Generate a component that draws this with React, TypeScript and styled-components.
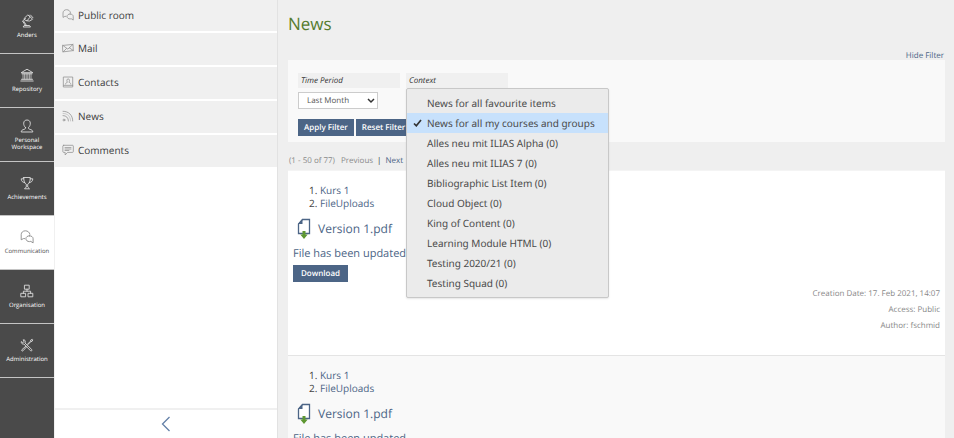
import React from "react";
import styled, { createGlobalStyle, css } from "styled-components";

const GlobalStyle = createGlobalStyle`
  *, *::before, *::after { box-sizing: border-box; }
  body {
    margin: 0;
    background: #efefef;
    color: #333;
    font-family: "Open Sans", "Noto Sans", sans-serif;
    font-size: 11px;
    text-rendering: geometricPrecision;
  }
  button, select { font: inherit; text-rendering: inherit; }
  a { color: #4c6586; text-decoration: none; }
  ul, ol { margin: 0; padding: 0; }
`;

const Page = styled.div`
  display: flex;
  height: 100vh;
  overflow: hidden;
`;

const MainBar = styled.nav`
  flex: 0 0 54px;
  background: #4a4a4a;
`;

const BarButton = styled.button<{ $active?: boolean }>`
  display: flex;
  flex-direction: column;
  align-items: center;
  justify-content: center;
  gap: 4px;
  width: 100%;
  height: 54px;
  padding: 0;
  border: 0;
  border-bottom: 1px solid #c4c4c4;
  background: ${(p) => (p.$active ? "#fff" : "#4a4a4a")};
  color: ${(p) => (p.$active ? "#4a4a4a" : "#fff")};
  font-size: 6px;
  line-height: 7px;
  text-align: center;

  svg {
    color: ${(p) => (p.$active ? "#8a8a8a" : "#dcdcdc")};
  }
`;

const BarLabel = styled.span`
  padding: 0 4px;
`;

const Slate = styled.aside`
  flex: 0 0 224px;
  display: flex;
  flex-direction: column;
  background: #fff;
  border-left: 1px solid #f0f0f0;
  border-right: 1px solid #e2e2e2;
`;

const SlateList = styled.div`
  flex: 1;
  display: flex;
  flex-direction: column;
  gap: 2px;
`;

const SlateButton = styled.button<{ $first?: boolean }>`
  display: flex;
  align-items: center;
  gap: 4px;
  height: ${(p) => (p.$first ? 31 : 32)}px;
  padding: 0 7px 2px;
  border: 0;
  background: #f0f0f0;
  color: #3c3c3c;
  font-size: 10px;
  text-align: left;

  svg {
    color: #8f8f8f;
  }
`;

const SlateClose = styled.button`
  display: flex;
  align-items: center;
  justify-content: center;
  height: 30px;
  padding: 0;
  border: 0;
  border-top: 2px solid #f0f0f0;
  background: #fff;
  color: #6480a8;
`;

const Content = styled.main`
  flex: 1;
  min-width: 0;
  padding: 10px 9px 0 10px;
`;

const Title = styled.h1`
  margin: 0;
  color: #557b2e;
  font-size: 17px;
  font-weight: 400;
  line-height: 28px;
`;

const FilterToggle = styled.div`
  display: flex;
  justify-content: flex-end;
  margin-top: 14px;
  padding-right: 1px;
  font-size: 8px;
  line-height: 8px;
`;

const FilterPanel = styled.form`
  padding: 13px 10px 6px;
  background: #f9f9f9;
`;

const Fields = styled.div`
  display: flex;
  gap: 6px;
`;

const Field = styled.div`
  position: relative;
  width: 102px;
`;

const FieldLabel = styled.label`
  display: block;
  padding: 0 3px;
  background: #f0f0f0;
  font-size: 8px;
  font-style: italic;
  line-height: 15px;
`;

const SelectBox = styled.div`
  position: relative;
  display: flex;
  align-items: center;
  width: 80px;
  margin-top: 4px;

  svg {
    position: absolute;
    right: 3px;
    pointer-events: none;
  }
`;

const Select = styled.select`
  appearance: none;
  width: 100%;
  height: 17px;
  padding: 0 8px;
  border: 1px solid #ccc;
  border-radius: 0;
  background: #fff;
  color: #555;
  font-size: 8px;
  line-height: 15px;
`;

const Menu = styled.ul`
  position: absolute;
  z-index: 2;
  top: 15px;
  left: 0;
  width: 203px;
  padding: 4px 0;
  border: 1px solid #c8c8c8;
  border-radius: 2px;
  background: #ebebeb;
  box-shadow: 0 1px 2px rgba(0, 0, 0, 0.1);
  list-style: none;
`;

const MenuOption = styled.button<{ $selected: boolean }>`
  display: grid;
  grid-template-columns: 14px 1fr;
  align-items: center;
  width: 100%;
  height: 20px;
  padding: 0 6px;
  border: 0;
  background: ${(p) => (p.$selected ? "#c7e1fc" : "transparent")};
  color: #4a4a4a;
  font-family: "Noto Sans", sans-serif;
  font-size: 10px;
  line-height: 20px;
  text-align: left;
  white-space: nowrap;
`;

const FilterActions = styled.div`
  display: flex;
  gap: 2px;
  margin-top: 10px;
`;

const solid = css`
  height: 17px;
  border: 0;
  background: #4c6586;
  color: #fff;
  font-size: 8px;
  font-weight: 600;
  line-height: 17px;
  white-space: nowrap;
`;

const ActionButton = styled.button`
  ${solid}
  padding: 0 6px;
`;

const DownloadButton = styled.button`
  ${solid}
  display: block;
  margin-top: 3px;
  padding: 0 8px;
`;

const Pager = styled.nav`
  display: flex;
  gap: 4px;
  padding: 12px 1px 2px;
  color: #8a8a8a;
  font-size: 8px;
  line-height: 14px;
`;

const PagerCount = styled.span`
  margin-right: 2px;
`;

const Divider = styled.span`
  color: #333;
`;

const PreviousButton = styled.button`
  padding: 0;
  border: 0;
  background: none;
  color: inherit;
  line-height: inherit;
`;

const NewsItem = styled.article<{ $shaded?: boolean }>`
  padding: 13px 5px 0;
  height: 185px;
  background: ${(p) => (p.$shaded ? "#f9f9f9" : "#fff")};
  border-top: 1px solid ${(p) => (p.$shaded ? "#e4e4e4" : "#f4f4f4")};
`;

const Crumbs = styled.ol`
  padding-left: 27px;
  color: #444;
  font-size: 10px;
  line-height: 13px;
`;

const FileTitle = styled.h2`
  display: flex;
  align-items: center;
  gap: 6px;
  margin: 8px 0 0;
  padding-left: 4px;
  font-size: 12px;
  font-weight: 400;
  line-height: 22px;
`;

const Message = styled.a`
  display: block;
  margin-top: 6px;
  font-size: 11px;
  line-height: 16px;
`;

const Meta = styled.div`
  margin-top: 4px;
  color: #888;
  font-size: 8px;
  line-height: 16px;
  text-align: right;
`;

const MetaLine = styled.p`
  margin: 0;
`;

const Glyph = ({ size = 14, children }: { size?: number; children: React.ReactNode }) => (
  <svg width={size} height={size} viewBox="0 0 14 14" fill="none" stroke="currentColor" strokeWidth="0.9" strokeLinejoin="round" strokeLinecap="round" aria-hidden="true">
    {children}
  </svg>
);

const icons = {
  lamp: (
    <>
      <path d="M3.500 13h7l-1-1.500h-5Z" />
      <path d="M5.500 11.500 2.500 7l3-2.500M3.800 7.200l2.700 4.300" />
      <path d="m4.500 4 3-2.800 1.500.3.900 1.800L7 6.800 4.900 6Z" />
      <path d="m9 1.500 3.500 3.800L9.500 7 7 6.800M10.500 1l2.500 2.800" />
    </>
  ),
  repository: (
    <>
      <path d="M1.500 4.500 7 1.200l5.500 3.300ZM2 5.800h10M1.500 11.300h11M.8 13h12.400" />
      <path strokeWidth="0.700" d="M3 6v5M4.600 6v5M6.200 6v5M7.800 6v5M9.400 6v5M11 6v5" />
    </>
  ),
  person: (
    <path d="M5.500 8.500C4.200 7.300 3.600 5.800 3.700 4.100 3.800 2.100 5.200 1 7 1s3.200 1.100 3.300 3.100c.1 1.700-.5 3.200-1.800 4.400-.2 1.200.3 1.500 1.600 1.900 1.900.5 2.600 1.200 2.700 2.600H1.200c.1-1.400.8-2.100 2.700-2.600 1.300-.4 1.800-.7 1.600-1.900Z" />
  ),
  trophy: (
    <>
      <path d="M3.700 1.500h6.600c0 3.800-.9 6-2.600 6.700v2.800l1.800 1.800h-5L6.300 11V8.200C4.600 7.500 3.700 5.300 3.700 1.500Z" />
      <path d="M3.800 2.800H1.200c.2 2.300 1.200 3.500 3.500 3.900M10.200 2.800h2.600c-.2 2.300-1.200 3.500-3.500 3.900" />
    </>
  ),
  chat: (
    <>
      <path d="M4.600 8.600H3.400L1.200 9.800V4.600C1.200 2.500 2.900.8 5.300.8S9.600 2.300 9.900 4.300" />
      <path d="M9.500 5.800c-2.100 0-3.600 1.200-3.600 2.900s1.500 2.900 3.600 2.900c.5 0 .9-.1 1.300-.2l2.300 1.500V8.700c0-1.700-1.500-2.900-3.600-2.900Z" />
    </>
  ),
  organisation: (
    <>
      <path d="M4.800 1.200h4.400v4H4.800ZM1.200 9.300h4.400v3.500H1.200ZM8.400 9.300h4.400v3.500H8.400Z" />
      <path d="M7 5.200v2M3.400 9.300V7.200h7.200v2.100" />
    </>
  ),
  tools: (
    <>
      <path d="m4.900 4.900 6.900 6.700c.6.700-.4 1.800-1.200 1.200L3.900 6c-1.500.4-2.900-.7-2.600-2.400l1.500 1 1.400-1.200-1-1.600c1.500-.2 2.600 1 2.200 2.500" />
      <path d="m7.500 6.200 3-3 .3-1.200 1.400-.7.600.6-.7 1.400-1.200.3-3 3M5.800 8.200l-3.900 3.500c-.7.800.3 1.800 1.100 1.100l3.600-3.900" />
    </>
  ),
  mail: (
    <>
      <path d="m1 4 11.800-1.200.4 7.200L1.400 11.500Z" />
      <path d="m1 4 5.800 4.300 6-5.500M1.400 11.500l3.900-4M13.200 10 8.600 6.800" />
    </>
  ),
  contacts: (
    <>
      <path d="M2 1.200h10.500v11.600H2ZM2 10.900h10.500" />
      <path d="M4.200 9.300c.1-1.400 1-1.600 2.100-2C5.500 6.200 5.200 3.400 7.200 3.400s1.700 2.800.9 3.900c1.100.4 2 .6 2.100 2" />
    </>
  ),
  news: (
    <>
      <circle cx="2.300" cy="11.700" r="1.100" />
      <path d="M1.200 6.500c3.800 0 6.300 2.500 6.300 6.300M1.200 1.500c6.700 0 11.300 4.600 11.300 11.300" />
      <path d="M1.200 4c5.300 0 8.800 3.500 8.800 8.800" opacity=".5" />
    </>
  ),
  comments: (
    <>
      <path d="M2 1.500h10.200c.6 0 1 .4 1 1v6.300c0 .6-.4 1-1 1H6.500l-2.800 3V9.800H2c-.6 0-1-.4-1-1V2.500c0-.6.4-1 1-1Z" />
      <path d="M3.500 4.200h7M3.500 5.900h7M3.500 7.600h4.500" />
    </>
  ),
};

type IconName = keyof typeof icons;

const FileIcon = () => (
  <svg width="15" height="22" viewBox="0 0 15 22" aria-hidden="true">
    <path d="M5.500 1.500h7v14H1.500V6Z" fill="#fff" stroke="#4c6586" strokeWidth="1.300" />
    <path d="M5.500 1v5H1Z" fill="#4c6586" />
    <path d="M5.500 13h3v3.500h2.200L7 21l-3.700-4.500h2.200Z" fill="#5e9732" />
  </svg>
);

const barItems: { icon: IconName; label: string }[] = [
  { icon: "lamp", label: "Anders" },
  { icon: "repository", label: "Repository" },
  { icon: "person", label: "Personal Workspace" },
  { icon: "trophy", label: "Achievements" },
  { icon: "chat", label: "Communication" },
  { icon: "organisation", label: "Organisation" },
  { icon: "tools", label: "Administration" },
];

const slateItems: { icon: IconName; label: string }[] = [
  { icon: "chat", label: "Public room" },
  { icon: "mail", label: "Mail" },
  { icon: "contacts", label: "Contacts" },
  { icon: "news", label: "News" },
  { icon: "comments", label: "Comments" },
];

const contexts = [
  "News for all favourite items",
  "News for all my courses and groups",
  "Alles neu mit ILIAS Alpha (0)",
  "Alles neu mit ILIAS 7 (0)",
  "Bibliographic List Item (0)",
  "Cloud Object (0)",
  "King of Content (0)",
  "Learning Module HTML (0)",
  "Testing 2020/21 (0)",
  "Testing Squad (0)",
];

const NewsEntry = ({ shaded }: { shaded?: boolean }) => (
  <NewsItem $shaded={shaded}>
    <Crumbs>
      <li><a href="#kurs">Kurs 1</a></li>
      <li><a href="#uploads">FileUploads</a></li>
    </Crumbs>
    <FileTitle>
      <FileIcon />
      <a href="#file">Version 1.pdf</a>
    </FileTitle>
    <Message href="#update">File has been updated.</Message>
    <DownloadButton type="button">Download</DownloadButton>
    <Meta>
      <MetaLine>Creation Date: 17. Feb 2021, 14:07</MetaLine>
      <MetaLine>Access: Public</MetaLine>
      <MetaLine>Author: fschmid</MetaLine>
    </Meta>
  </NewsItem>
);

export default function App() {
  const [selected, setSelected] = React.useState(1);

  return (
    <>
      <GlobalStyle />
      <Page>
        <MainBar>
          {barItems.map((item) => (
            <BarButton key={item.label} type="button" $active={item.icon === "chat"}>
              <Glyph>{icons[item.icon]}</Glyph>
              <BarLabel>{item.label}</BarLabel>
            </BarButton>
          ))}
        </MainBar>
        <Slate>
          <SlateList>
            {slateItems.map((item, i) => (
              <SlateButton key={item.label} type="button" $first={i === 0}>
                <Glyph size={12}>{icons[item.icon]}</Glyph>
                {item.label}
              </SlateButton>
            ))}
          </SlateList>
          <SlateClose type="button" aria-label="Close">
            <svg width="10" height="16" viewBox="0 0 10 16" fill="none" stroke="currentColor" strokeWidth="1.300" aria-hidden="true">
              <path d="M8.500 1 1.500 8l7 7" />
            </svg>
          </SlateClose>
        </Slate>
        <Content>
          <Title>News</Title>
          <FilterToggle>
            <a href="#filter">Hide Filter</a>
          </FilterToggle>
          <FilterPanel>
            <Fields>
              <Field>
                <FieldLabel htmlFor="period">Time Period</FieldLabel>
                <SelectBox>
                  <Select id="period" defaultValue="month">
                    <option value="month">Last Month</option>
                  </Select>
                  <svg width="8" height="6" viewBox="0 0 8 6" fill="none" stroke="#333" strokeWidth="1.500" aria-hidden="true">
                    <path d="m1 1 3 3 3-3" />
                  </svg>
                </SelectBox>
              </Field>
              <Field>
                <FieldLabel as="div" id="context-label">Context</FieldLabel>
                <Menu role="listbox" aria-labelledby="context-label">
                  {contexts.map((name, i) => (
                    <li key={name} role="presentation">
                      <MenuOption type="button" role="option" aria-selected={i === selected} $selected={i === selected} onClick={() => setSelected(i)}>
                        <span>
                          {i === selected && (
                            <svg width="9" height="8" viewBox="0 0 9 8" fill="none" stroke="#333" strokeWidth="1.700" aria-hidden="true">
                              <path d="m1 4.500 2.300 2.300L8 1" />
                            </svg>
                          )}
                        </span>
                        {name}
                      </MenuOption>
                    </li>
                  ))}
                </Menu>
              </Field>
            </Fields>
            <FilterActions>
              <ActionButton type="button">Apply Filter</ActionButton>
              <ActionButton type="button">Reset Filter</ActionButton>
            </FilterActions>
          </FilterPanel>
          <Pager aria-label="Pages">
            <PagerCount>(1 - 50 of 77)</PagerCount>
            <PreviousButton type="button" disabled>Previous</PreviousButton>
            <Divider>|</Divider>
            <a href="#next">Next</a>
          </Pager>
          <NewsEntry />
          <NewsEntry shaded />
        </Content>
      </Page>
    </>
  );
}
